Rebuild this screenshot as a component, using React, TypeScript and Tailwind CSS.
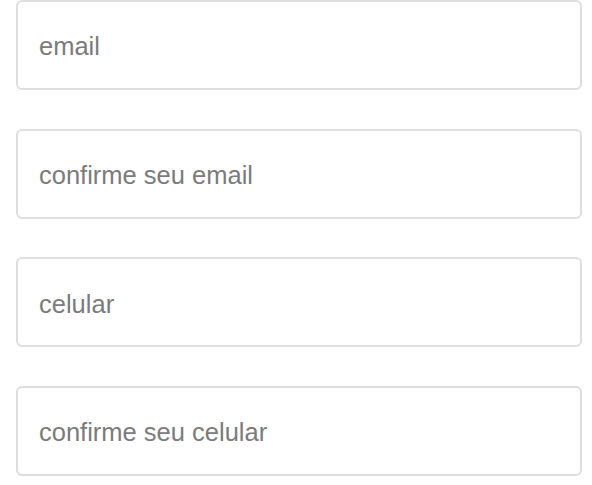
const fields = ["email", "confirme seu email", "celular", "confirme seu celular"];

export default function App() {
  return (
    <div className="w-[592px] h-[485px] bg-white pl-[16px] pr-[10px] font-['Liberation_Sans',Arial,sans-serif]">
      <div className="flex flex-col gap-[38.7px]">
        {fields.map((f) => (
          <div
            key={f}
            className="h-[90px] flex items-center pl-[21px] border-2 border-[#dedede] rounded-[6px] text-[25.5px] text-[#7b7b7b]"
          >
            <span className="pt-[3px]">{f}</span>
          </div>
        ))}
      </div>
    </div>
  );
}
